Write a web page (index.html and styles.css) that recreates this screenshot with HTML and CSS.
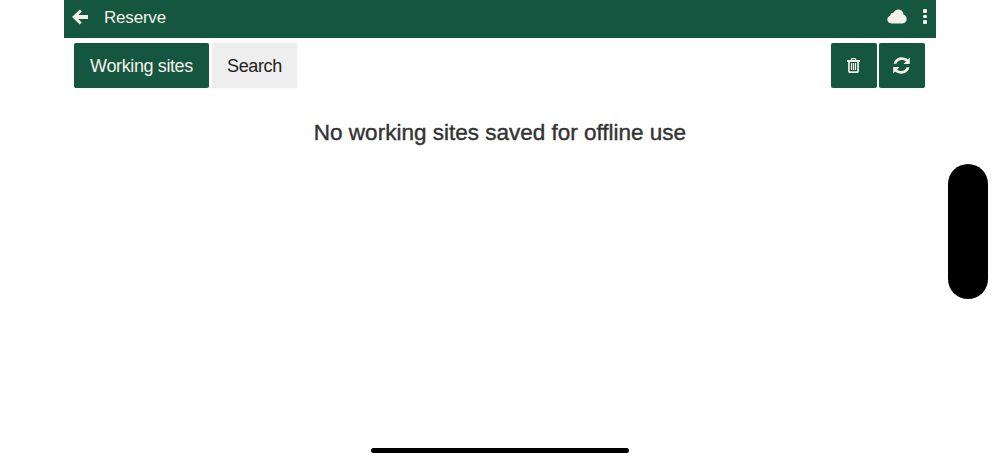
FILE: index.html
```html
<!DOCTYPE html>
<html lang="en">
<head>
    <meta charset="UTF-8">
    <meta name="viewport" content="width=device-width, initial-scale=1.0">
    <title>Reserve</title>
    <link rel="stylesheet" href="styles.css">
</head>
<body>
    <div class="app">
        <header class="top-bar">
            <svg class="back-icon" viewBox="0 0 16 16">
                <path d="M7.800 0.500 0 8l7.800 7.500 2-2L6.300 10H16V6H6.300l3.500-3.500z"/>
            </svg>
            <span class="top-title">Reserve</span>
            <svg class="cloud-icon" viewBox="0 0 20 15">
                <path d="M4.500 14.500C2 14.500 0.300 12.800 0.300 10.600c0-1.900 1.200-3.400 3-3.900C3.300 4.800 4.800 3.600 6.400 3.800 7.400 1.800 9.200 0.500 11.300 0.500c2.900 0 5.100 2.200 5.200 5.100 1.900 0.700 3.200 2.400 3.200 4.500 0 2.500-2 4.400-4.400 4.400z"/>
            </svg>
            <div class="dots">
                <span></span>
                <span></span>
                <span></span>
            </div>
        </header>

        <div class="toolbar">
            <div class="tabs">
                <button class="btn btn-green btn-tab">Working sites</button>
                <button class="btn btn-grey">Search</button>
            </div>
            <div class="actions">
                <button class="btn btn-green btn-icon" aria-label="Delete">
                    <svg class="trash-icon" viewBox="0 0 14 16">
                        <path d="M4.800 0h4.400l1 2.200H14v1.900h-1.200v10.300c0 0.900-0.600 1.600-1.400 1.600H2.600c-0.800 0-1.400-0.700-1.400-1.600V4.100H0V2.200h3.800zM5.500 1.300 5.100 2.200h3.800L8.500 1.300zM3 4.100v10.100h8V4.100zM4.200 5.400h1.300v7.500H4.200zM6.350 5.400h1.300v7.500H6.350zM8.500 5.400h1.300v7.500H8.500z" fill-rule="evenodd"/>
                    </svg>
                </button>
                <button class="btn btn-green btn-icon" aria-label="Refresh">
                    <svg class="refresh-icon" viewBox="0 0 16 16">
                        <path d="M15.800 0.500v6h-6l2.300-2.300C11.100 3.300 9.800 2.800 8.200 2.800c-2.400 0-4.300 1.300-5 3.500H.6C1.400 2.700 4.500.2 8.200.2c2.300 0 4.300.9 5.800 2.100z"/>
                        <path d="M.2 15.500v-6h6l-2.300 2.300c1 .9 2.300 1.400 3.900 1.400 2.400 0 4.300-1.300 5-3.500h2.600c-.8 3.600-3.900 6.100-7.600 6.100-2.300 0-4.300-.9-5.800-2.100z"/>
                    </svg>
                </button>
            </div>
        </div>

        <h2 class="empty-msg">No working sites saved for offline use</h2>
    </div>

    <div class="side-pill"></div>
    <div class="home-bar"></div>
</body>
</html>
```

FILE: styles.css
```css
html, body {
    height: 100%;
}

body {
    font-family: 'Liberation Sans', Arial, sans-serif;
    margin: 0;
    padding: 0;
    background-color: #fff;
    color: #333;
    overflow: hidden;
}

.app {
    width: 872px;
    margin: 0 auto;
}

.top-bar {
    background-color: #14563f;
    color: #f4f0e8;
    height: 38px;
    display: flex;
    align-items: center;
    padding: 0 8px 2px 8px;
    box-sizing: border-box;
}

.back-icon {
    width: 16px;
    height: 16px;
    fill: #f4f0e8;
    margin-right: 16px;
    margin-top: -2px;
}

.top-title {
    font-size: 17px;
    letter-spacing: -0.200px;
    flex: 1;
}

.cloud-icon {
    width: 20px;
    height: 15px;
    fill: #f4f0e8;
    margin-right: 16px;
    margin-top: -3px;
}

.dots {
    display: flex;
    flex-direction: column;
    gap: 2px;
    margin-right: 1px;
    margin-top: -3px;
}

.dots span {
    width: 4px;
    height: 3.500px;
    background-color: #f4f0e8;
    border-radius: 1px;
}

.toolbar {
    display: flex;
    justify-content: space-between;
    padding: 5px 11px 0 10px;
}

.tabs {
    display: flex;
    gap: 3px;
}

.actions {
    display: flex;
    gap: 2px;
}

.btn {
    height: 45px;
    border: none;
    border-radius: 2px;
    font-family: inherit;
    font-size: 18px;
    letter-spacing: -0.380px;
    padding: 1px 0 0 0;
    box-shadow: 0 0 1px rgba(0, 0, 0, 0.2);
}

.btn-green {
    background-color: #14563f;
    color: #f4f0e8;
}

.btn-tab {
    width: 135px;
}

.btn-grey {
    background-color: #eee;
    color: #222;
    width: 85px;
}

.btn-icon {
    width: 46px;
    padding: 0;
    display: flex;
    align-items: center;
    justify-content: center;
}

.trash-icon {
    width: 13px;
    height: 15px;
    fill: #f4f0e8;
    margin-right: 1px;
}

.refresh-icon {
    width: 17px;
    height: 17px;
    fill: #f4f0e8;
    margin-right: 1px;
}

.empty-msg {
    font-size: 22.500px;
    font-weight: 400;
    -webkit-text-stroke: 0.400px #333;
    text-align: center;
    margin: 32px 0 0 0;
    color: #333;
}

.side-pill {
    position: absolute;
    left: 948px;
    top: 164px;
    width: 40px;
    height: 135px;
    background-color: #000;
    border-radius: 20px;
}

.home-bar {
    position: absolute;
    left: 371px;
    top: 448px;
    width: 258px;
    height: 5px;
    background-color: #000;
    border-radius: 3px;
}
```
